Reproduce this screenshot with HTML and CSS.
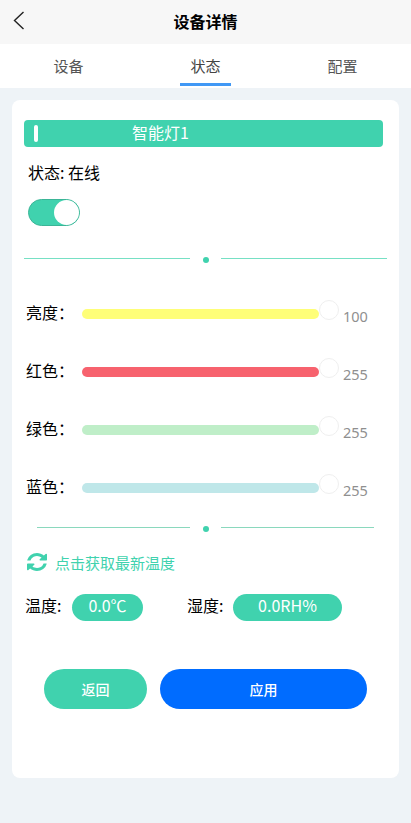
FILE: index.html
```html
<!DOCTYPE html>
<html lang="zh">
<head>
<meta charset="utf-8">
<title>设备详情</title>
<link rel="stylesheet" href="styles.css">
</head>
<body>
<header class="nav">
  <svg class="back" width="14" height="20" viewBox="0 0 14 20"><path d="M11.5 2 L2.5 10.5 L11.5 19" fill="none" stroke="#222" stroke-width="1.4"/></svg>
  <h1 class="nav-title">设备详情</h1>
</header>
<nav class="tabs">
  <div class="tab">设备</div>
  <div class="tab tab-active">状态</div>
  <div class="tab">配置</div>
</nav>
<main class="page">
  <section class="card">
    <div class="title-bar"><span class="mark"></span><span class="title-text">智能灯1</span></div>
    <div class="status">状态: 在线</div>
    <div class="switch"><span class="knob"></span></div>
    <div class="divider divider-wide"><span class="line"></span><span class="dot"></span><span class="line"></span></div>
    <div class="sliders">
      <div class="row"><span class="row-label">亮度：</span><div class="track yellow"><span class="thumb"></span></div><span class="val">100</span></div>
      <div class="row"><span class="row-label">红色：</span><div class="track red"><span class="thumb"></span></div><span class="val">255</span></div>
      <div class="row"><span class="row-label">绿色：</span><div class="track green"><span class="thumb"></span></div><span class="val">255</span></div>
      <div class="row"><span class="row-label">蓝色：</span><div class="track blue"><span class="thumb"></span></div><span class="val">255</span></div>
    </div>
    <div class="divider divider-narrow"><span class="line"></span><span class="dot"></span><span class="line"></span></div>
    <div class="refresh">
      <svg class="refresh-icon" width="20" height="18" viewBox="128 128 1536 1536" preserveAspectRatio="none"><path d="M1639 1056q0 5-1 7-64 268-268 434.500t-478 166.500q-146 0-282.500-55t-243.500-157l-129 129q-19 19-45 19t-45-19-19-45v-448q0-26 19-45t45-19h448q26 0 45 19t19 45-19 45l-137 137q71 66 161 102t187 36q134 0 250-65t186-179q11-17 53-117 8-23 30-23h192q13 0 22.500 9.500t9.500 22.500zm25-800v448q0 26-19 45t-45 19h-448q-26 0-45-19t-19-45 19-45l138-138q-148-137-349-137-134 0-250 65t-186 179q-11 17-53 117-8 23-30 23h-199q-13 0-22.500-9.500t-9.500-22.500v-7q65-268 270-434.500t480-166.500q146 0 284 55.500t245 156.500l130-129q19-19 45-19t45 19 19 45z" fill="#40d2ae"/></svg>
      <span class="refresh-text">点击获取最新温度</span>
    </div>
    <div class="readings">
      <span class="read-label">温度:</span><span class="pill pill-temp">0.0℃</span>
      <span class="read-label">湿度:</span><span class="pill pill-hum">0.0RH%</span>
    </div>
    <div class="actions">
      <button class="btn btn-back">返回</button>
      <button class="btn btn-apply">应用</button>
    </div>
  </section>
</main>
</body>
</html>
```
FILE: styles.css
```css
* { box-sizing: border-box; }
html, body { margin: 0; height: 100%; }
body {
  background: #eef3f7;
  font-family: "Noto Sans CJK SC", "Liberation Sans", sans-serif;
  color: #000;
  height: 823px;
  overflow: hidden;
}
.nav {
  height: 44px;
  background: #f7f7f7;
  display: flex;
  align-items: center;
  justify-content: center;
  position: relative;
}
.back { position: absolute; left: 12px; top: 10px; }
.nav-title { margin: 0; font-size: 16px; font-weight: 700; line-height: 42px; height: 44px; }
.tabs { height: 44px; background: #fff; display: flex; }
.tab {
  flex: 1;
  text-align: center;
  font-size: 15px;
  line-height: 44px;
  color: #555;
  position: relative;
}
.tab-active { color: #444; }
.tab-active::after {
  content: "";
  position: absolute;
  left: 43px;
  width: 51px;
  bottom: 2px;
  height: 3px;
  background: #4098f5;
}
.page { padding: 12px 12px 0; }
.card {
  background: #fff;
  border-radius: 8px;
  height: 678px;
  padding: 20px 12px 0;
}
.title-bar {
  width: 359px;
  height: 27px;
  background: #40d2ae;
  border-radius: 4px;
  display: flex;
  align-items: center;
  padding-left: 10px;
  color: #fff;
  font-size: 16px;
}
.mark { width: 4px; height: 17px; background: #fff; border-radius: 2px; }
.title-text { margin-left: 94px; line-height: 25px; height: 27px; }
.status { font-size: 16px; line-height: 22px; margin: 14px 0 0 4px; }
.switch {
  width: 52px;
  height: 27px;
  margin: 16px 0 0 4px;
  background: #40d2ae;
  border-radius: 14px;
  border: 1px solid #3bb597;
  display: flex;
  justify-content: flex-end;
}
.knob { width: 25px; height: 25px; background: #fff; border-radius: 50%; }
.divider { display: flex; align-items: flex-start; height: 6px; }
.line { flex: 1; height: 1px; }
.dot {
  width: 6px;
  height: 6px;
  border-radius: 50%;
  background: #40d2ae;
  margin: -1px 12.500px 0;
}
.divider-wide { margin: 32px 0 0; width: 363px; }
.divider-wide .line { background: #76e0c4; }
.divider-narrow { margin: 0 0 0 13px; width: 337px; }
.divider-narrow .line { background: #8ad8bd; }
.sliders { margin-top: 21px; height: 242px; }
.row { height: 58px; display: flex; position: relative; padding-left: 2px; }
.row-label { font-size: 16px; line-height: 22px; margin-top: 16px; width: 56px; }
.track {
  width: 237px;
  height: 10px;
  margin-top: 24px;
  border-radius: 5px;
  position: relative;
}
.yellow { background: #fefe78; }
.red { background: #f7626e; }
.green { background: #bfeec8; }
.blue { background: #bfe7e9; }
.thumb {
  position: absolute;
  left: 237px;
  top: -9px;
  width: 20px;
  height: 20px;
  border-radius: 50%;
  background: #fff;
  border: 1px solid #efefef;
}
.val { font-size: 14.500px; color: #8f8f8f; line-height: 20px; margin: 21px 0 0 24px; font-family: "Noto Sans", "Liberation Sans", sans-serif; }
.refresh {
  display: flex;
  align-items: flex-start;
  margin: 20px 0 0 3px;
  height: 20px;
  color: #40d2ae;
  font-size: 15px;
}
.refresh-icon { margin: 0 8px 0 0; }
.refresh-text { line-height: 20px; }
.readings { display: flex; align-items: flex-start; height: 27px; margin-top: 21px; padding-left: 1px; font-size: 16px; }
.read-label { width: 46px; line-height: 22px; }
.pill {
  height: 27px;
  border-radius: 14px;
  background: #40d2ae;
  color: #fff;
  font-size: 16px;
  line-height: 22px;
  text-align: center;
}
.pill-temp { width: 71px; margin: 0 44px 0 1px; }
.pill-hum { width: 109px; }
.actions { display: flex; gap: 13px; margin: 48px 0 0 20px; }
.btn {
  height: 40px;
  border: 0;
  border-radius: 20px;
  color: #fff;
  font-family: inherit;
  font-size: 14px;
  font-weight: 500;
  padding: 0;
}
.btn-back { width: 103px; background: #40d2ae; }
.btn-apply { width: 207px; background: #006cff; }
```
